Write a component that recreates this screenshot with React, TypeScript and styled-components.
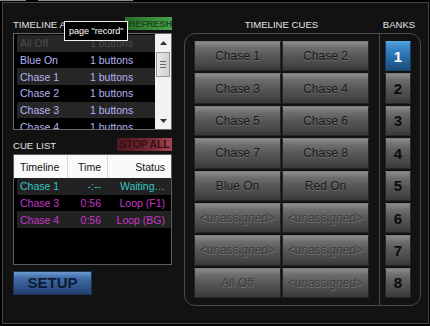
import * as React from 'react';
import styled, { createGlobalStyle } from 'styled-components';

const GlobalStyle = createGlobalStyle`
  html, body {
    margin: 0;
    padding: 0;
    background: #000;
  }
  body {
    font-family: "Liberation Sans", Arial, sans-serif;
  }
  * {
    box-sizing: border-box;
  }
`;

const Screen = styled.div`
  width: 430px;
  height: 326px;
  background: #000;
  overflow: hidden;
`;

const Tabs = styled.div`
  display: flex;
  gap: 12px;
  height: 2px;
`;

const Tab = styled.div<{ $w: number }>`
  width: ${p => p.$w}px;
  border-top: 1px solid #8a8a8a;
`;

const Frame = styled.div`
  margin-left: 2px;
  width: 427px;
  height: 322px;
  border: 1px solid #444;
  background: #121212;
  display: flex;
  gap: 12px;
  padding: 14px 7px 0 10px;
`;

const LeftCol = styled.div`
  position: relative;
  width: 159px;
  display: flex;
  flex-direction: column;
`;

const HeadRow = styled.div<{ $mt?: number }>`
  display: flex;
  align-items: center;
  justify-content: space-between;
  height: 13px;
  margin-top: ${p => p.$mt || 0}px;
`;

const Heading = styled.div`
  font-size: 9.6px;
  color: #e4e4e4;
  white-space: nowrap;
  min-width: 0;
  padding-top: 2px;
`;

const SmallBtn = styled.div<{ $tone: 'green' | 'red'; $w: number }>`
  flex-shrink: 0;
  position: relative;
  z-index: 1;
  width: ${p => p.$w}px;
  height: 13px;
  font-size: ${p => (p.$tone === 'green' ? '9.4px' : '10.6px')};
  font-weight: bold;
  line-height: 13px;
  text-align: ${p => (p.$tone === 'green' ? 'right' : 'center')};
  white-space: nowrap;
  overflow: hidden;
  letter-spacing: -0.2px;
  color: ${p => (p.$tone === 'green' ? '#1d4a1d' : '#3a0d12')};
  background: ${p =>
    p.$tone === 'green'
      ? 'linear-gradient(90deg, #2c6a2c, #3c8c3c 60%, #48a048)'
      : 'linear-gradient(90deg, #4a1a1f, #7a2c36 65%, #a44656)'};
`;

const Tooltip = styled.div`
  position: absolute;
  left: 51px;
  top: 4px;
  z-index: 2;
  height: 20px;
  padding: 0 4px;
  border: 1px solid #f0f0f0;
  background: #000;
  color: #fff;
  font-size: 9px;
  line-height: 18px;
  white-space: nowrap;
`;

const ListBox = styled.div`
  margin-top: 3px;
  height: 97px;
  border: 1px solid #6a6a6a;
  background: #000;
  display: flex;
`;

const ListRows = styled.div`
  flex: 1;
  padding: 1px 0 0 3px;
  overflow: hidden;
`;

const ListRow = styled.div<{ $alt: boolean; $dim?: boolean }>`
  display: flex;
  height: 16.7px;
  align-items: center;
  padding-left: 3px;
  font-size: 10.5px;
  white-space: nowrap;
  background: ${p => (p.$alt ? '#000' : '#262626')};
  color: ${p => (p.$dim ? '#4c4c4c' : '#b4b4f4')};
`;

const NameCell = styled.span`
  width: 70px;
`;

const Scrollbar = styled.div`
  width: 16px;
  background: #f2f2f2;
  display: flex;
  flex-direction: column;
  align-items: center;
`;

const Arrow = styled.div`
  height: 17px;
  display: flex;
  align-items: center;
  justify-content: center;
`;

const Thumb = styled.div`
  margin-top: 1px;
  width: 14px;
  height: 25px;
  border: 1px solid #9a9a9a;
  background: linear-gradient(90deg, #e8e8e8, #d0d0d0);
  display: flex;
  flex-direction: column;
  justify-content: center;
  align-items: center;
  gap: 2px;
`;

const Grip = styled.div`
  width: 6px;
  height: 1px;
  background: #666;
`;

const Spacer = styled.div`
  flex: 1;
`;

const CueTable = styled.div`
  margin-top: 3px;
  height: 111px;
  border: 1px solid #5c5c5c;
  background: #000;
`;

const TableHead = styled.div`
  display: grid;
  grid-template-columns: 53px 40px 1fr;
  height: 23px;
  background: #fafafa;
  font-size: 10.5px;
  color: #111;
`;

const HeadCell = styled.div<{ $align: 'left' | 'right'; $sep?: boolean }>`
  display: flex;
  align-items: center;
  justify-content: ${p => (p.$align === 'left' ? 'flex-start' : 'flex-end')};
  padding: ${p => (p.$align === 'left' ? '0 0 0 6px' : '0 6px 0 0')};
  border-left: ${p => (p.$sep ? '1px solid #d6d6d6' : 'none')};
`;

const TableBody = styled.div`
  padding-left: 3px;
`;

const CueRow = styled.div<{ $alt: boolean; $color: string }>`
  display: grid;
  grid-template-columns: 50px 40px 1fr;
  height: 16.7px;
  align-items: center;
  font-size: 10.5px;
  white-space: nowrap;
  color: ${p => p.$color};
  background: ${p => (p.$alt ? '#000' : '#222')};
`;

const Cell = styled.span<{ $align: 'left' | 'right' }>`
  text-align: ${p => p.$align};
  padding: ${p => (p.$align === 'left' ? '0 0 0 3px' : '0 6px 0 0')};
`;

const SetupBtn = styled.div`
  margin-top: 6px;
  width: 79px;
  height: 24px;
  border: 1px solid #1d3358;
  background: linear-gradient(#6c9bd2 0%, #4370aa 25%, #32598f 60%, #25416f 100%);
  color: #0c1a34;
  font-size: 15px;
  font-weight: bold;
  line-height: 22px;
  text-align: center;
`;

const RightCol = styled.div`
  width: 237px;
  display: flex;
  flex-direction: column;
`;

const RightHead = styled.div`
  display: flex;
  height: 16px;
  align-items: center;
`;

const RightTitle = styled.div<{ $w: number }>`
  width: ${p => p.$w}px;
  text-align: center;
  font-size: 9.6px;
  line-height: 16px;
  color: #e4e4e4;
  white-space: nowrap;
`;

const CueBox = styled.div`
  height: 273px;
  border: 1px solid #4a4a4a;
  border-radius: 11px;
  display: flex;
`;

const CueGrid = styled.div`
  width: 194px;
  padding: 7px 10px 7px 9px;
  display: grid;
  grid-template-columns: 87px 87px;
  grid-template-rows: repeat(8, 1fr);
  column-gap: 1px;
  row-gap: 2px;
`;

const BankCol = styled.div`
  flex: 1;
  border-left: 1px solid #4a4a4a;
  padding: 7px 0 7px 5px;
  display: grid;
  grid-template-columns: 26px;
  grid-template-rows: repeat(8, 1fr);
  row-gap: 2px;
`;

const CueBtn = styled.div<{ $dim?: boolean }>`
  display: flex;
  align-items: center;
  justify-content: center;
  border: 1px solid #262626;
  border-top-color: #7a7a7a;
  background: linear-gradient(#8c8c8c 0%, #6c6c6c 22%, #575757 50%, #474747 80%, #393939 100%);
  font-size: 12px;
  white-space: nowrap;
  color: ${p => (p.$dim ? '#3c3c3c' : '#181818')};
  text-shadow: ${p =>
    p.$dim ? '0.5px 0.5px 0 rgba(150, 150, 150, 0.55)' : '0 1px 0 rgba(255, 255, 255, 0.18)'};
`;

const BankBtn = styled.div<{ $active: boolean }>`
  display: flex;
  align-items: center;
  justify-content: center;
  border: 1px solid ${p => (p.$active ? '#163f68' : '#262626')};
  border-top-color: ${p => (p.$active ? '#5aa8e4' : '#7a7a7a')};
  background: ${p =>
    p.$active
      ? 'linear-gradient(#4e9edc 0%, #3580c0 30%, #286aa4 60%, #1c4d7c 100%)'
      : 'linear-gradient(#8c8c8c 0%, #6c6c6c 22%, #575757 50%, #474747 80%, #393939 100%)'};
  color: ${p => (p.$active ? '#fff' : '#0c0c0c')};
  font-size: 15px;
  font-weight: bold;
`;

const assignments = [
  { name: 'All Off', count: '1 buttons', dim: true },
  { name: 'Blue On', count: '1 buttons' },
  { name: 'Chase 1', count: '1 buttons' },
  { name: 'Chase 2', count: '1 buttons' },
  { name: 'Chase 3', count: '1 buttons' },
  { name: 'Chase 4', count: '1 buttons' },
];

const cueRows = [
  { tl: 'Chase 1', time: '-:--', status: 'Waiting…', color: '#36c6c6' },
  { tl: 'Chase 3', time: '0:56', status: 'Loop (F1)', color: '#c836c8' },
  { tl: 'Chase 4', time: '0:56', status: 'Loop (BG)', color: '#c836c8' },
];

const U = '<unassigned>';
const cues = [
  'Chase 1', 'Chase 2', 'Chase 3', 'Chase 4', 'Chase 5', 'Chase 6', 'Chase 7', 'Chase 8',
  'Blue On', 'Red On', U, U, U, U, 'All Off', U,
];

const App: React.FC = () => {
  return (
    <Screen>
      <GlobalStyle />
      <Tabs>
        <Tab $w={26} />
        <Tab $w={95} />
      </Tabs>
      <Frame>
        <LeftCol>
          <HeadRow>
            <Heading>TIMELINE ASSIGNMENT</Heading>
            <SmallBtn $tone="green" $w={47}>REFRESH</SmallBtn>
          </HeadRow>
          <Tooltip>page "record"</Tooltip>
          <ListBox>
            <ListRows>
              {assignments.map((a, i) => (
                <ListRow key={i} $alt={i % 2 === 1} $dim={a.dim}>
                  <NameCell>{a.name}</NameCell>
                  <span>{a.count}</span>
                </ListRow>
              ))}
            </ListRows>
            <Scrollbar>
              <Arrow>
                <svg width="7" height="4" viewBox="0 0 7 4">
                  <path d="M0 4 L3.5 0 L7 4 Z" fill="#333" />
                </svg>
              </Arrow>
              <Thumb>
                <Grip />
                <Grip />
                <Grip />
              </Thumb>
              <Spacer />
              <Arrow>
                <svg width="7" height="4" viewBox="0 0 7 4">
                  <path d="M0 0 L3.5 4 L7 0 Z" fill="#333" />
                </svg>
              </Arrow>
            </Scrollbar>
          </ListBox>
          <HeadRow $mt={8}>
            <Heading>CUE LIST</Heading>
            <SmallBtn $tone="red" $w={55}>STOP ALL</SmallBtn>
          </HeadRow>
          <CueTable>
            <TableHead>
              <HeadCell $align="left">Timeline</HeadCell>
              <HeadCell $align="right" $sep>Time</HeadCell>
              <HeadCell $align="right" $sep>Status</HeadCell>
            </TableHead>
            <TableBody>
              {cueRows.map((r, i) => (
                <CueRow key={i} $alt={i % 2 === 1} $color={r.color}>
                  <Cell $align="left">{r.tl}</Cell>
                  <Cell $align="right">{r.time}</Cell>
                  <Cell $align="right">{r.status}</Cell>
                </CueRow>
              ))}
            </TableBody>
          </CueTable>
          <SetupBtn>SETUP</SetupBtn>
        </LeftCol>
        <RightCol>
          <RightHead>
            <RightTitle $w={195}>TIMELINE CUES</RightTitle>
            <RightTitle $w={40}>BANKS</RightTitle>
          </RightHead>
          <CueBox>
            <CueGrid>
              {cues.map((c, i) => (
                <CueBtn key={i} $dim={c === U || c === 'All Off'}>{c}</CueBtn>
              ))}
            </CueGrid>
            <BankCol>
              {[1, 2, 3, 4, 5, 6, 7, 8].map(n => (
                <BankBtn key={n} $active={n === 1}>{n}</BankBtn>
              ))}
            </BankCol>
          </CueBox>
        </RightCol>
      </Frame>
    </Screen>
  );
};

export default App;
